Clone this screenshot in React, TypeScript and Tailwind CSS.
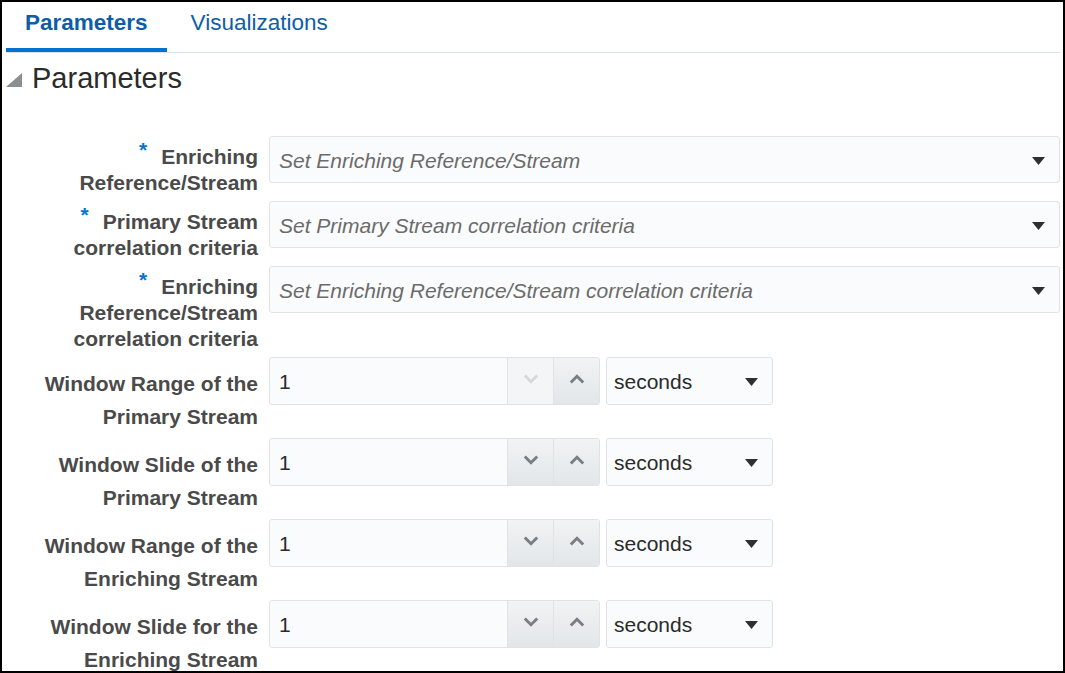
import React from 'react';

type SelectRow = { lines: string[]; placeholder: string };
type SpinRow = { lines: string[]; value: string; unit: string; downDisabled?: boolean };

const selectRows: SelectRow[] = [
  { lines: ['Enriching', 'Reference/Stream'], placeholder: 'Set Enriching Reference/Stream' },
  { lines: ['Primary Stream', 'correlation criteria'], placeholder: 'Set Primary Stream correlation criteria' },
  {
    lines: ['Enriching', 'Reference/Stream', 'correlation criteria'],
    placeholder: 'Set Enriching Reference/Stream correlation criteria',
  },
];

const spinRows: SpinRow[] = [
  { lines: ['Window Range of the', 'Primary Stream'], value: '1', unit: 'seconds', downDisabled: true },
  { lines: ['Window Slide of the', 'Primary Stream'], value: '1', unit: 'seconds' },
  { lines: ['Window Range of the', 'Enriching Stream'], value: '1', unit: 'seconds' },
  { lines: ['Window Slide for the', 'Enriching Stream'], value: '1', unit: 'seconds' },
];

const Caret = () => (
  <svg width="13" height="8" viewBox="0 0 13 8" className="shrink-0 mt-[2px]">
    <polygon points="0,0 13,0 6.5,8" fill="#2f2f2f" />
  </svg>
);

const Chevron = ({ up, disabled }: { up?: boolean; disabled?: boolean }) => (
  <svg width="16" height="10" viewBox="0 0 16 10">
    <path
      d={up ? 'M1.8 8.5 L8 2.3 L14.2 8.5' : 'M1.8 1.5 L8 7.7 L14.2 1.5'}
      fill="none"
      stroke={disabled ? '#d6d9dc' : '#7b7f83'}
      strokeWidth="3"
    />
  </svg>
);

export default function App() {
  return (
    <div className="w-[1065px] h-[673px] box-border border-2 border-black bg-white overflow-hidden font-['Liberation_Sans',Arial,sans-serif]">
      {/* tabs */}
      <div className="flex ml-[4px] mr-[3px] border-b border-[#dde2e8]">
        <div className="h-[50px] px-[19px] pt-[8px] border-b-4 border-[#0572ce] text-[22.5px] leading-[26px] font-bold text-[#0d5ea6]">
          Parameters
        </div>
        <div className="h-[50px] pl-[24px] pt-[8px] text-[22.5px] leading-[26px] text-[#0d5ea6]">Visualizations</div>
      </div>

      {/* section header */}
      <div className="flex items-center h-[34px] mt-[8px] ml-[4px]">
        <svg width="16" height="14" viewBox="0 0 16 14" className="mt-[3px]">
          <polygon points="16,0 16,14 0,14" fill="#8c8f92" />
        </svg>
        <span className="ml-[10px] text-[29px] leading-[34px] text-[#2b2b2b]">Parameters</span>
      </div>

      {/* form */}
      <div className="flex flex-col gap-[5px] pt-[41px] mr-[3px]">
        {selectRows.map((r, i) => (
          <div key={i} className="flex items-start">
            <div className="w-[256px] shrink-0 pt-[8px] text-right text-[21px] leading-[26px] font-bold text-[#4a4a4a]">
              {r.lines.map((l, j) => (
                <div key={j}>
                  {j === 0 && <span className="relative -top-[7px] mr-[14px] text-[#0572ce]">*</span>}
                  {l}
                </div>
              ))}
            </div>
            <div className="ml-[11px] flex-1 h-[47px] flex items-center justify-between pl-[9px] pr-[14px] rounded-[3px] border border-[#dfe3e8] bg-[#fafbfc]">
              <span className="pt-[2px] italic text-[21px] text-[#6b6b6b]">{r.placeholder}</span>
              <Caret />
            </div>
          </div>
        ))}

        {spinRows.map((r, i) => (
          <div key={i} className="flex items-start">
            <div className="w-[256px] shrink-0 pt-[10px] text-right text-[21px] leading-[33px] font-bold text-[#4a4a4a]">
              {r.lines.map((l, j) => (
                <div key={j}>{l}</div>
              ))}
            </div>
            <div className="ml-[11px] w-[331px] h-[48px] flex rounded-[3px] border border-[#dfe3e8] bg-[#fafbfc] overflow-hidden">
              <div className="flex-1 flex items-center pl-[9px] pt-[2px] text-[21px] text-[#2b2b2b]">{r.value}</div>
              <div
                className={`w-[46px] pb-[5px] flex items-center justify-center border-l border-[#dfe3e8] ${
                  r.downDisabled ? 'bg-[#f4f5f6]' : 'bg-gradient-to-b from-[#f1f3f4] to-[#e3e6e9]'
                }`}
              >
                <Chevron disabled={r.downDisabled} />
              </div>
              <div className="w-[46px] pb-[5px] flex items-center justify-center border-l border-[#dfe3e8] bg-gradient-to-b from-[#f1f3f4] to-[#e3e6e9]">
                <Chevron up />
              </div>
            </div>
            <div className="ml-[6px] w-[167px] h-[48px] flex items-center justify-between pl-[7px] pr-[14px] rounded-[3px] border border-[#dfe3e8] bg-[#fafbfc]">
              <span className="pt-[2px] text-[21px] text-[#2b2b2b]">{r.unit}</span>
              <Caret />
            </div>
          </div>
        ))}
      </div>
    </div>
  );
}
